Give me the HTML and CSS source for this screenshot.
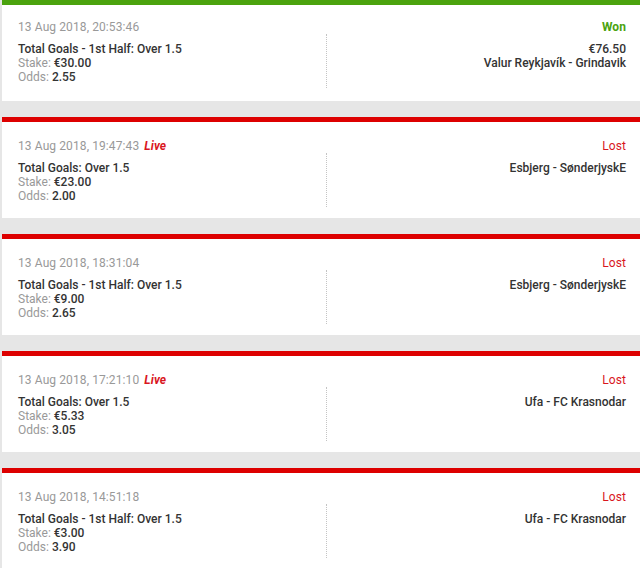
FILE: index.html
```html
<!DOCTYPE html>
<html lang="en">
<head>
<meta charset="utf-8">
<title>Bet history</title>
<link rel="stylesheet" href="styles.css">
</head>
<body>
<div class="list">
  <div class="card card--won">
    <div class="card__head">
      <span class="date">13 Aug 2018, 20:53:46</span>
      <span class="status status--won">Won</span>
    </div>
    <div class="card__body">
      <div class="info">
        <div class="market">Total Goals - 1st Half: Over 1.5</div>
        <div class="row"><span class="label">Stake:</span> <span class="value">€30.00</span></div>
        <div class="row"><span class="label">Odds:</span> <span class="value">2.55</span></div>
      </div>
      <div class="event">
        <div class="value">€76.50</div>
        <div class="value">Valur Reykjavík - Grindavik</div>
      </div>
    </div>
  </div>

  <div class="card card--lost">
    <div class="card__head">
      <span class="date">13 Aug 2018, 19:47:43 <span class="live">Live</span></span>
      <span class="status status--lost">Lost</span>
    </div>
    <div class="card__body">
      <div class="info">
        <div class="market">Total Goals: Over 1.5</div>
        <div class="row"><span class="label">Stake:</span> <span class="value">€23.00</span></div>
        <div class="row"><span class="label">Odds:</span> <span class="value">2.00</span></div>
      </div>
      <div class="event">
        <div class="value">Esbjerg - SønderjyskE</div>
      </div>
    </div>
  </div>

  <div class="card card--lost">
    <div class="card__head">
      <span class="date">13 Aug 2018, 18:31:04</span>
      <span class="status status--lost">Lost</span>
    </div>
    <div class="card__body">
      <div class="info">
        <div class="market">Total Goals - 1st Half: Over 1.5</div>
        <div class="row"><span class="label">Stake:</span> <span class="value">€9.00</span></div>
        <div class="row"><span class="label">Odds:</span> <span class="value">2.65</span></div>
      </div>
      <div class="event">
        <div class="value">Esbjerg - SønderjyskE</div>
      </div>
    </div>
  </div>

  <div class="card card--lost">
    <div class="card__head">
      <span class="date">13 Aug 2018, 17:21:10 <span class="live">Live</span></span>
      <span class="status status--lost">Lost</span>
    </div>
    <div class="card__body">
      <div class="info">
        <div class="market">Total Goals: Over 1.5</div>
        <div class="row"><span class="label">Stake:</span> <span class="value">€5.33</span></div>
        <div class="row"><span class="label">Odds:</span> <span class="value">3.05</span></div>
      </div>
      <div class="event">
        <div class="value">Ufa - FC Krasnodar</div>
      </div>
    </div>
  </div>

  <div class="card card--lost">
    <div class="card__head">
      <span class="date">13 Aug 2018, 14:51:18</span>
      <span class="status status--lost">Lost</span>
    </div>
    <div class="card__body">
      <div class="info">
        <div class="market">Total Goals - 1st Half: Over 1.5</div>
        <div class="row"><span class="label">Stake:</span> <span class="value">€3.00</span></div>
        <div class="row"><span class="label">Odds:</span> <span class="value">3.90</span></div>
      </div>
      <div class="event">
        <div class="value">Ufa - FC Krasnodar</div>
      </div>
    </div>
  </div>
</div>
</body>
</html>
```
FILE: styles.css
```css
html, body {
  margin: 0;
  padding: 0;
}
body {
  background: #e6e6e6;
  font-family: Roboto, "Liberation Sans", sans-serif;
  font-size: 12px;
  line-height: 14px;
  color: #333;
  overflow: hidden;
}
.list {
  padding-left: 2px;
  display: flex;
  flex-direction: column;
  gap: 16px;
}
.card {
  background: #fff;
  border-top: 5px solid #dd0000;
  padding: 17px 14px 0 16px;
  box-sizing: border-box;
  height: 101px;
  flex-shrink: 0;
}
.card:first-child {
  padding-top: 15px;
}
.card--won {
  border-top-color: #4ba30e;
}
.card__head {
  display: flex;
  justify-content: space-between;
  align-items: baseline;
  letter-spacing: 0.1px;
}
.date {
  color: #999;
}
.live {
  color: #d9161e;
  font-style: italic;
  font-weight: 700;
  margin-left: 2px;
}
.status {
  font-weight: 400;
}
.status--won {
  color: #4ba30e;
  font-weight: 700;
}
.status--lost {
  color: #d9161e;
}
.card__body {
  display: grid;
  grid-template-columns: 308px 1fr;
}
.info {
  padding: 8px 0 4px;
}
.market, .value {
  font-weight: 500;
  color: #333;
}
.label {
  color: #999;
}
.event {
  border-left: 1px dotted #c4c4c4;
  padding-top: 8px;
  text-align: right;
}
```
